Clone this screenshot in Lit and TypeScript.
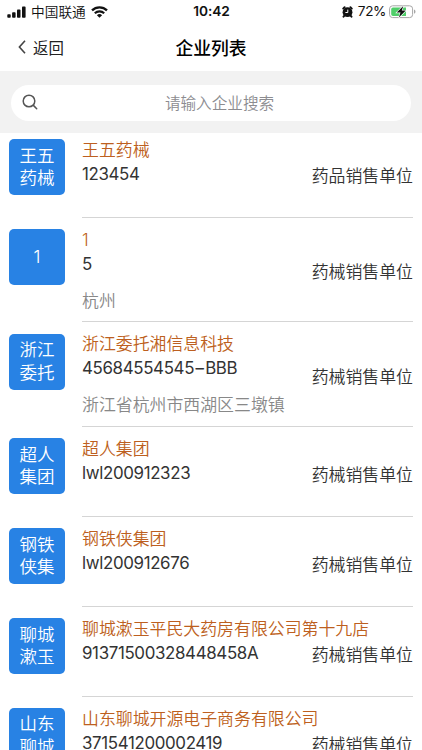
import { LitElement, html, css, nothing } from "lit";
import { customElement, property } from "lit/decorators.js";

interface Company {
  badge: string[];
  name: string;
  code: string;
  address?: string;
  type: string;
}

const companies: Company[] = [
  { badge: ["王五", "药械"], name: "王五药械", code: "123454", type: "药品销售单位" },
  { badge: ["1"], name: "1", code: "5", address: "杭州", type: "药械销售单位" },
  { badge: ["浙江", "委托"], name: "浙江委托湘信息科技", code: "45684554545–BBB", address: "浙江省杭州市西湖区三墩镇", type: "药械销售单位" },
  { badge: ["超人", "集团"], name: "超人集团", code: "lwl200912323", type: "药械销售单位" },
  { badge: ["钢铁", "侠集"], name: "钢铁侠集团", code: "lwl200912676", type: "药械销售单位" },
  { badge: ["聊城", "漱玉"], name: "聊城漱玉平民大药房有限公司第十九店", code: "91371500328448458A", type: "药械销售单位" },
  { badge: ["山东", "聊城"], name: "山东聊城开源电子商务有限公司", code: "371541200002419", type: "药械销售单位" },
];

@customElement("status-bar")
export class StatusBar extends LitElement {
  static styles = css`
    :host { display: grid; grid-template-columns: 1fr auto 1fr; align-items: center; height: 23px; padding: 0 6px 0 7px; color: #111; font: 13.7px/23px Inter, "Noto Sans CJK SC", sans-serif; }
    .side { display: flex; align-items: center; }
    .right { justify-content: flex-end; }
    .signal { margin-right: 5px; }
    .carrier { font-weight: 350; padding-top: 1px; line-height: 22px; }
    .wifi { margin-left: 5px; }
    .time { font-weight: 600; font-size: 13.7px; letter-spacing: -0.1px; }
    .alarm { margin-right: 5px; }
    .percent { font-size: 13.6px; letter-spacing: -0.4px; margin-right: 3px; }
    svg { display: block; flex: none; }
  `;
  render() {
    return html`
      <div class="side">
        <svg class="signal" width="19" height="12" viewBox="0 0 19 12" fill="#111">
          <rect x="0.3" y="8.3" width="3.4" height="3.4" rx="0.8" />
          <rect x="5.1" y="6.3" width="3.5" height="5.4" rx="0.8" />
          <rect x="10" y="3.6" width="3.5" height="8.1" rx="0.8" />
          <rect x="15" y="0.6" width="3.6" height="11.1" rx="0.8" />
        </svg>
        <span class="carrier">中国联通</span>
        <svg class="wifi" width="17" height="12" viewBox="0 0 17 12" fill="none" stroke="#111">
          <path d="M1 4.4A10.8 10.8 0 0 1 16 4.4" stroke-width="2.3" />
          <path d="M3.8 7.3A6.7 6.7 0 0 1 13.2 7.3" stroke-width="2.1" />
          <path d="M8.5 11.8 5.9 9.2a3.7 3.7 0 0 1 5.2 0z" fill="#111" stroke="none" />
        </svg>
      </div>
      <span class="time">10:42</span>
      <div class="side right">
        <svg class="alarm" width="11" height="12" viewBox="0 0 11 12">
          <path d="M1.2 2.6 2.6 1.2M9.8 2.6 8.4 1.2M2.2 9.8l-.7.9M8.8 9.8l.7.9" stroke="#111" stroke-width="1.9" stroke-linecap="round" />
          <circle cx="5.5" cy="6.2" r="4.9" fill="#111" />
          <path d="M5.8 3.6V6.5H3.4" fill="none" stroke="#fff" stroke-width="1" />
        </svg>
        <span class="percent">72%</span>
        <svg width="27" height="14" viewBox="0 0 27 14">
          <rect x="0.6" y="0.8" width="23" height="11.8" rx="3" fill="#fff" stroke="#a6a6a6" />
          <path d="M4 2.4H17V11H4A1.8 1.8 0 0 1 2.2 9.2V4.2A1.8 1.8 0 0 1 4 2.4z" fill="#4fce69" />
          <path d="M25 4.6v4.2q1.5-.6 1.5-2.1T25 4.6z" fill="#a6a6a6" />
          <path d="M14.3 1 7.7 7.6h3.8L9.8 12.6l7-7h-4z" fill="#111" stroke="#fff" stroke-width="1.2" paint-order="stroke" />
        </svg>
      </div>
    `;
  }
}

@customElement("company-row")
export class CompanyRow extends LitElement {
  @property({ attribute: false }) company!: Company;
  static styles = css`
    :host { display: flex; box-sizing: border-box; height: 89.8px; padding: 0 9px; font: 350 16.9px/24px Inter, "Noto Sans CJK SC", sans-serif; color: #333; }
    :host([tall]) { height: 104.7px; }
    .badge { flex: none; display: flex; flex-direction: column; justify-content: center; box-sizing: border-box; width: 56px; height: 56px; margin: 11.3px 17px 0 0; border-radius: 5px; background: #2882e4; color: #fff; text-align: center; font-size: 17.5px; line-height: 22.5px; }
    .body { flex: 1; min-width: 0; display: grid; grid-template-columns: 1fr auto; border-bottom: 1px solid #d5d5d5; }
    .details { grid-area: 1 / 1; padding-top: 10px; white-space: nowrap; min-width: 0; }
    .name { color: #bd5f20; }
    .code { font-weight: 380; line-height: 24px; letter-spacing: -0.35px; }
    .dash { padding: 0 1.5px; }
    .address { color: #888; margin-top: 13px; }
    .type { grid-area: 1 / 2; padding-top: 36.3px; }
    :host([tall]) .type { padding-top: 42.5px; }
  `;
  render() {
    const c = this.company;
    const [head, tail] = c.code.split("–");
    return html`
      <div class="badge">${c.badge.map((line) => html`<span>${line}</span>`)}</div>
      <div class="body">
        <div class="details">
          <div class="name">${c.name}</div>
          <div class="code">${head}${tail ? html`<span class="dash">–</span>${tail}` : nothing}</div>
          ${c.address ? html`<div class="address">${c.address}</div>` : nothing}
        </div>
        <div class="type">${c.type}</div>
      </div>
    `;
  }
}

@customElement("app-root")
export class AppRoot extends LitElement {
  static styles = css`
    :host { display: flex; flex-direction: column; width: 100%; height: 750px; overflow: hidden; background: #fff; font-family: Inter, "Noto Sans CJK SC", sans-serif; }
    .nav { flex: none; display: grid; grid-template-columns: 1fr auto 1fr; align-items: center; height: 48px; padding: 0 17px; }
    .back { display: flex; align-items: center; gap: 6px; font-size: 15.4px; color: #222; }
    .title { font-size: 17.8px; font-weight: 500; color: #000; }
    .search { flex: none; box-sizing: border-box; height: 62px; padding: 13.5px 11px 12px; background: #f2f2f2; }
    .field { display: grid; grid-template-columns: 18px 1fr; align-items: center; box-sizing: border-box; height: 36px; padding: 0 12px 1px 11px; border-radius: 18px; background: #fff; color: #8c8c90; font-size: 15.6px; font-weight: 350; text-align: center; }
    .list { flex: 1; min-height: 0; overflow: hidden; }
    .list company-row:first-child { margin-top: -5px; }
    svg { display: block; }
  `;
  render() {
    return html`
      <status-bar></status-bar>
      <div class="nav">
        <div class="back">
          <svg width="10" height="14" viewBox="0 0 10 14" fill="none" stroke="#444" stroke-width="1.6"><path d="M8 .8 2.4 7 8 13.2" /></svg>
          <span>返回</span>
        </div>
        <span class="title">企业列表</span>
      </div>
      <div class="search">
        <div class="field">
          <svg width="16" height="16" viewBox="0 0 16 16" fill="none" stroke="#555" stroke-width="1.5" stroke-linecap="round">
            <circle cx="7" cy="7" r="5.8" /><path d="m11.4 11.4 3.3 3.3" />
          </svg>
          <span>请输入企业搜索</span>
        </div>
      </div>
      <div class="list">
        ${companies.map((c) => html`<company-row .company=${c} ?tall=${!!c.address}></company-row>`)}
      </div>
    `;
  }
}
